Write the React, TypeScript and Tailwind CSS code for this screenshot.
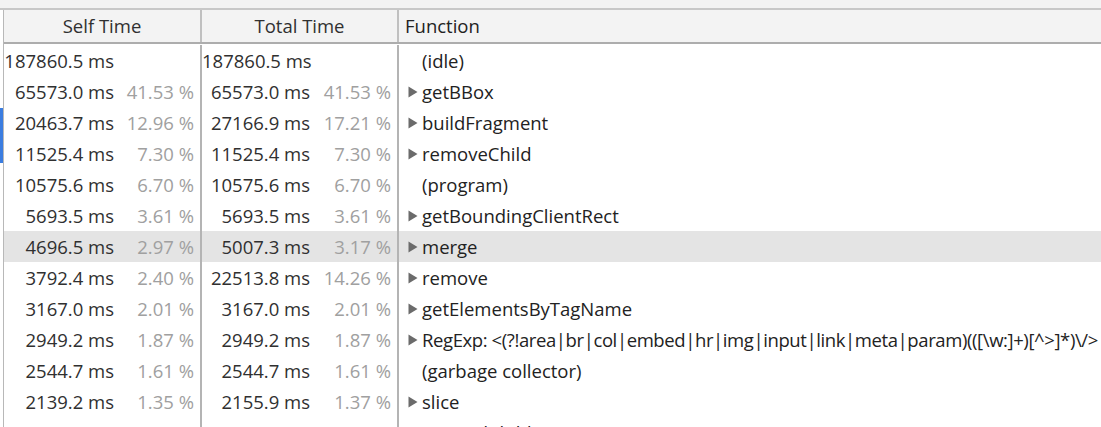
import React from 'react';

interface Row {
  self: string;
  selfPct?: string;
  total: string;
  totalPct?: string;
  name: string;
  expandable: boolean;
  tight?: boolean;
}

const rows: Row[] = [
  { self: '187860.5 ms', total: '187860.5 ms', name: '(idle)', expandable: false },
  { self: '65573.0 ms', selfPct: '41.53 %', total: '65573.0 ms', totalPct: '41.53 %', name: 'getBBox', expandable: true },
  { self: '20463.7 ms', selfPct: '12.96 %', total: '27166.9 ms', totalPct: '17.21 %', name: 'buildFragment', expandable: true },
  { self: '11525.4 ms', selfPct: '7.30 %', total: '11525.4 ms', totalPct: '7.30 %', name: 'removeChild', expandable: true },
  { self: '10575.6 ms', selfPct: '6.70 %', total: '10575.6 ms', totalPct: '6.70 %', name: '(program)', expandable: false },
  { self: '5693.5 ms', selfPct: '3.61 %', total: '5693.5 ms', totalPct: '3.61 %', name: 'getBoundingClientRect', expandable: true },
  { self: '4696.5 ms', selfPct: '2.97 %', total: '5007.3 ms', totalPct: '3.17 %', name: 'merge', expandable: true },
  { self: '3792.4 ms', selfPct: '2.40 %', total: '22513.8 ms', totalPct: '14.26 %', name: 'remove', expandable: true },
  { self: '3167.0 ms', selfPct: '2.01 %', total: '3167.0 ms', totalPct: '2.01 %', name: 'getElementsByTagName', expandable: true },
  { self: '2949.2 ms', selfPct: '1.87 %', total: '2949.2 ms', totalPct: '1.87 %', name: 'RegExp: <(?!area|br|col|embed|hr|img|input|link|meta|param)(([\\w:]+)[^>]*)\\/>', expandable: true, tight: true },
  { self: '2544.7 ms', selfPct: '1.61 %', total: '2544.7 ms', totalPct: '1.61 %', name: '(garbage collector)', expandable: false },
  { self: '2139.2 ms', selfPct: '1.35 %', total: '2155.9 ms', totalPct: '1.37 %', name: 'slice', expandable: true },
  { self: '1770.9 ms', selfPct: '1.12 %', total: '1770.9 ms', totalPct: '1.12 %', name: 'appendChild', expandable: true },
];

function Triangle() {
  return (
    <svg width="10" height="12" viewBox="0 0 10 12" className="shrink-0">
      <path d="M0.5 0.5 L9.5 6 L0.5 11.5 Z" fill="#6b6b6b" />
    </svg>
  );
}

export default function App() {
  return (
    <div
      className="relative w-[1101px] h-[427px] overflow-hidden bg-white text-[18.5px] text-[#303030]"
      style={{ fontFamily: '"Open Sans", "Noto Sans", sans-serif' }}
    >
      {/* top strip */}
      <div className="h-[8px] bg-[#f3f3f3] border-b-2 border-[#c8c8c8] box-content" />

      <div className="ml-[3px] border-l border-[#b8b8b8]">
        {/* header */}
        <div className="flex h-[32px] bg-[#f3f3f3] border-b-2 border-[#adadad] box-content">
          <div className="w-[198px] border-r-2 border-[#c0c0c0] flex items-center justify-center">Self Time</div>
          <div className="w-[197px] border-r-2 border-[#c0c0c0] flex items-center justify-center">Total Time</div>
          <div className="flex-1 flex items-center pl-[6px] text-[#222]">Function</div>
        </div>

        {/* rows */}
        <div className="pt-[1px]">
          {rows.map((r, i) => (
            <div key={i} className={`flex h-[31px] whitespace-nowrap ${r.name === 'merge' ? 'bg-[#e4e4e4]' : ''}`}>
              <div className="w-[198px] border-r-2 border-[#b4b4b4] flex items-center">
                <span className="w-[110px] text-right">{r.self}</span>
                <span className="flex-1 text-right pr-[6px] text-[#a0a0a0]">{r.selfPct}</span>
              </div>
              <div className="w-[197px] border-r-2 border-[#b4b4b4] flex items-center">
                <span className="w-[108px] text-right">{r.total}</span>
                <span className="flex-1 text-right pr-[6px] text-[#a0a0a0]">{r.totalPct}</span>
              </div>
              <div className="flex-1 min-w-0 flex items-center pl-[9px] gap-[4px] text-[#222]">
                {r.expandable ? <Triangle /> : <span className="w-[10px] shrink-0" />}
                <span className={r.tight ? 'tracking-[-0.4px]' : ''}>{r.name}</span>
              </div>
            </div>
          ))}
        </div>
      </div>

      {/* selection marker on left edge */}
      <div className="absolute left-0 top-[108px] w-[3px] h-[55px] bg-[#3b7de0]" />
    </div>
  );
}
